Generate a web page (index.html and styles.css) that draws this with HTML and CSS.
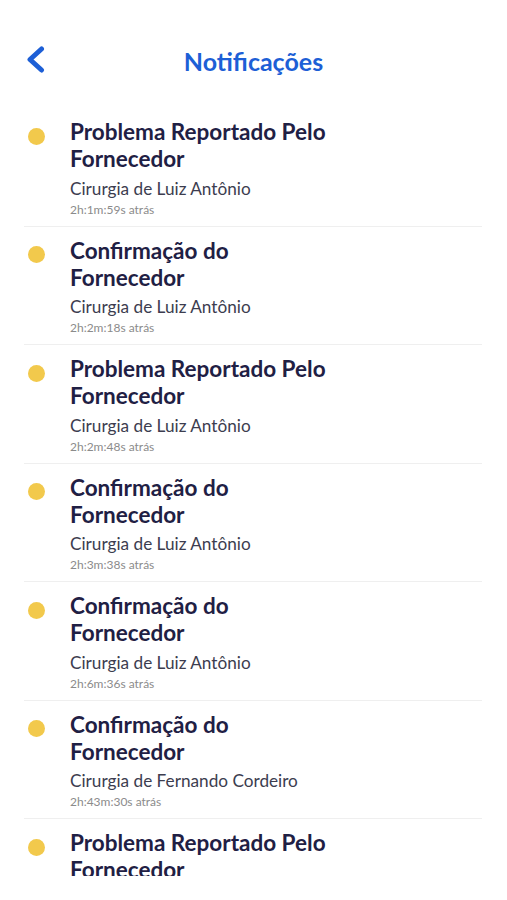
FILE: index.html
```html
<!DOCTYPE html>
<html lang="pt">
<head>
    <meta charset="UTF-8">
    <meta name="viewport" content="width=device-width, initial-scale=1.0">
    <title>Notificações</title>
    <link rel="stylesheet" href="styles.css">
</head>
<body>

<div class="header">
    <button class="back-button" aria-label="Voltar">
        <svg width="24" height="28" viewBox="0 0 24 28">
            <path d="M17.5 3 L6 13.5 L17.5 24" fill="none" stroke="#1d5fd6" stroke-width="5" stroke-linecap="round" stroke-linejoin="round"/>
        </svg>
    </button>
    <h1 class="title">Notificações</h1>
</div>

<div class="list">
    <div class="item">
        <span class="dot"></span>
        <div class="info">
            <div class="item-title">Problema Reportado Pelo Fornecedor</div>
            <div class="item-sub">Cirurgia de Luiz Antônio</div>
            <div class="item-time">2h:1m:59s atrás</div>
        </div>
    </div>
    <div class="item">
        <span class="dot"></span>
        <div class="info">
            <div class="item-title">Confirmação do Fornecedor</div>
            <div class="item-sub">Cirurgia de Luiz Antônio</div>
            <div class="item-time">2h:2m:18s atrás</div>
        </div>
    </div>
    <div class="item">
        <span class="dot"></span>
        <div class="info">
            <div class="item-title">Problema Reportado Pelo Fornecedor</div>
            <div class="item-sub">Cirurgia de Luiz Antônio</div>
            <div class="item-time">2h:2m:48s atrás</div>
        </div>
    </div>
    <div class="item">
        <span class="dot"></span>
        <div class="info">
            <div class="item-title">Confirmação do Fornecedor</div>
            <div class="item-sub">Cirurgia de Luiz Antônio</div>
            <div class="item-time">2h:3m:38s atrás</div>
        </div>
    </div>
    <div class="item">
        <span class="dot"></span>
        <div class="info">
            <div class="item-title">Confirmação do Fornecedor</div>
            <div class="item-sub">Cirurgia de Luiz Antônio</div>
            <div class="item-time">2h:6m:36s atrás</div>
        </div>
    </div>
    <div class="item">
        <span class="dot"></span>
        <div class="info">
            <div class="item-title">Confirmação do Fornecedor</div>
            <div class="item-sub">Cirurgia de Fernando Cordeiro</div>
            <div class="item-time">2h:43m:30s atrás</div>
        </div>
    </div>
    <div class="item">
        <span class="dot"></span>
        <div class="info">
            <div class="item-title">Problema Reportado Pelo Fornecedor</div>
            <div class="item-sub">Cirurgia de Luiz Antônio</div>
            <div class="item-time">2h:7m:02s atrás</div>
        </div>
    </div>
</div>

</body>
</html>
```

FILE: styles.css
```css
body {
    margin: 0;
    font-family: 'Lato', 'Noto Sans', sans-serif;
    background-color: #fff;
}
.header {
    position: relative;
    height: 108px;
    display: flex;
    justify-content: center;
    align-items: flex-start;
}
.back-button {
    position: absolute;
    left: 24px;
    top: 46px;
    padding: 0;
    border: none;
    background: none;
    cursor: pointer;
}
.title {
    margin: 46px 0 0;
    font-size: 25px;
    line-height: 30px;
    font-weight: 700;
    color: #1d5fd6;
}
.list {
    height: 768px;
    overflow: hidden;
    padding: 0 25px 0 24px;
}
.item {
    display: flex;
    align-items: flex-start;
    padding: 10px 0 9px 4px;
    border-bottom: 1px solid #efefef;
}
.dot {
    flex: none;
    width: 17px;
    height: 17px;
    margin-top: 9.5px;
    border-radius: 50%;
    background-color: #f2c94c;
}
.info {
    margin-left: 25px;
    width: 265px;
}
.item-title {
    font-size: 22.5px;
    line-height: 27px;
    font-weight: 700;
    color: #1f2044;
}
.item-sub {
    margin-top: 5.5px;
    font-size: 17.2px;
    line-height: 22px;
    color: #3c3d4f;
}
.item-time {
    margin-top: 3px;
    font-size: 12px;
    line-height: 14px;
    color: #8b8b8b;
}
```
